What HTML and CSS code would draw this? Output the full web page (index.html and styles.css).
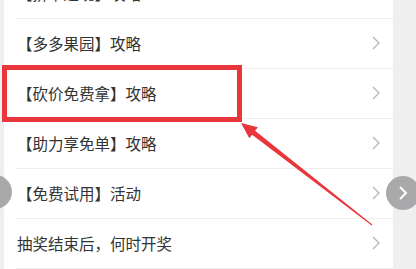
FILE: index.html
```html
<!DOCTYPE html>
<html lang="zh-CN">
<head>
    <meta charset="UTF-8">
    <title>攻略</title>
    <link rel="stylesheet" href="styles.css">
</head>
<body>
    <div class="page">
        <div class="panel">
            <ul class="list">
                <li class="item"><span>【拼单返现】攻略</span><svg class="chev" width="8" height="14" viewBox="0 0 8 14"><polyline points="1,1 7,7 1,13"/></svg></li>
                <li class="item"><span>【多多果园】攻略</span><svg class="chev" width="8" height="14" viewBox="0 0 8 14"><polyline points="1,1 7,7 1,13"/></svg></li>
                <li class="item"><span>【砍价免费拿】攻略</span><svg class="chev" width="8" height="14" viewBox="0 0 8 14"><polyline points="1,1 7,7 1,13"/></svg></li>
                <li class="item"><span>【助力享免单】攻略</span><svg class="chev" width="8" height="14" viewBox="0 0 8 14"><polyline points="1,1 7,7 1,13"/></svg></li>
                <li class="item"><span>【免费试用】活动</span><svg class="chev" width="8" height="14" viewBox="0 0 8 14"><polyline points="1,1 7,7 1,13"/></svg></li>
                <li class="item"><span>抽奖结束后，何时开奖</span><svg class="chev" width="8" height="14" viewBox="0 0 8 14"><polyline points="1,1 7,7 1,13"/></svg></li>
            </ul>
        </div>
    </div>

    <!-- 标注框和箭头 -->
    <div class="mark"></div>
    <svg class="arrow" width="416" height="269" viewBox="0 0 416 269">
        <polygon points="241,123 257.9,127.3 255.1,130.8 372.3,224.6 371.7,225.4 252.1,134.8 249.3,138.3"/>
    </svg>

    <!-- 左右翻页按钮 -->
    <div class="nav nav-left"></div>
    <div class="nav nav-right">
        <svg width="10" height="16" viewBox="0 0 10 16"><polyline points="2,2 8,8 2,14"/></svg>
    </div>
</body>
</html>
```

FILE: styles.css
```css
body {
    margin: 0;
    background-color: #efefef;
    font-family: "Noto Sans CJK SC", "Noto Sans", sans-serif;
    overflow: hidden;
    height: 269px;
    position: relative;
}
.page {
    display: flex;
    padding-left: 4px;
}
.panel {
    width: 389px;
    height: 269px;
    background-color: #fff;
}
.list {
    list-style: none;
    margin: -31px 0 0 12px;
    padding: 0;
}
.item {
    box-sizing: border-box;
    height: 50px;
    border-bottom: 1px solid #efefef;
    display: flex;
    align-items: center;
    justify-content: space-between;
    padding: 0 13px 2px 1px;
    font-size: 15.5px;
    color: #333;
}
.chev polyline {
    fill: none;
    stroke: #b8b8b8;
    stroke-width: 1.4;
}
.mark {
    position: absolute;
    left: 2px;
    top: 65px;
    width: 230px;
    height: 47px;
    border: 5px solid #e9363c;
}
.arrow {
    position: absolute;
    left: 0;
    top: 0;
}
.arrow polygon {
    fill: #e9363c;
}
.nav {
    position: absolute;
    width: 34px;
    height: 34px;
    border-radius: 50%;
    background-color: #a9a9ab;
    display: flex;
    align-items: center;
    justify-content: center;
}
.nav-left {
    left: -22px;
    top: 175px;
}
.nav-right {
    left: 386px;
    top: 176px;
}
.nav polyline {
    fill: none;
    stroke: #fff;
    stroke-width: 2;
}
```
